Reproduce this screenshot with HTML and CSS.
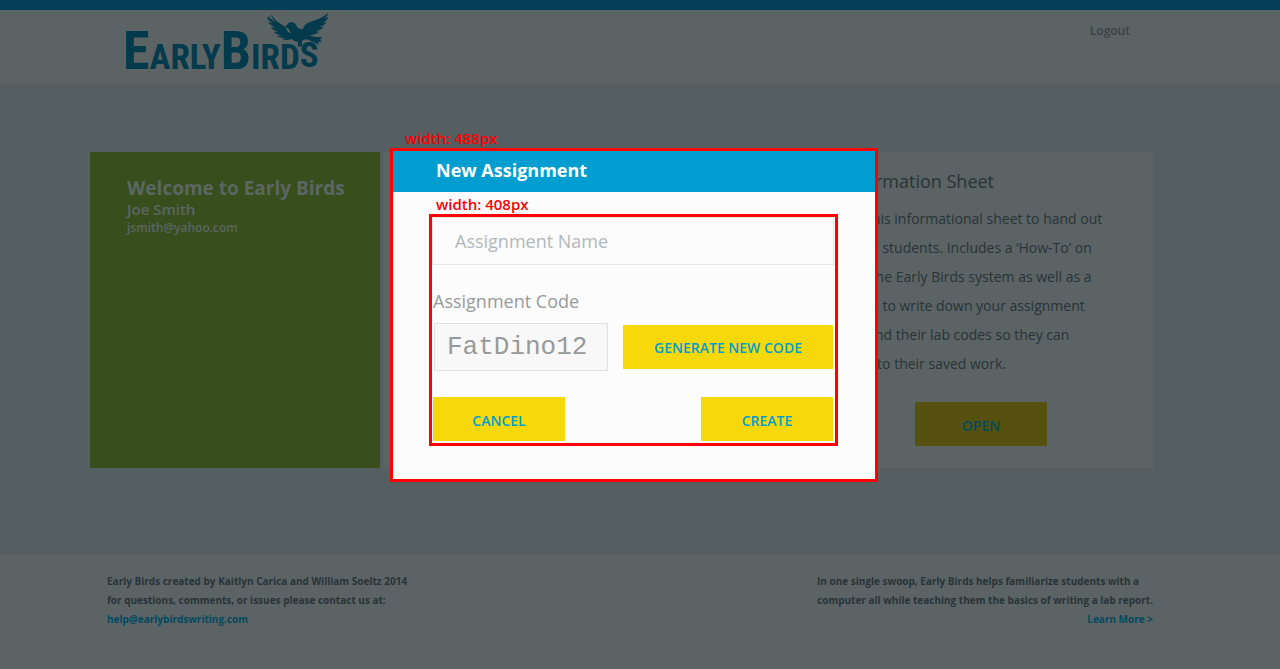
FILE: index.html
```html
<!DOCTYPE html>
<html lang="en">
<head>
<meta charset="utf-8">
<meta name="viewport" content="width=device-width, initial-scale=1">
<title>Early Birds</title>
<link rel="stylesheet" href="styles.css">
</head>
<body>
<header class="header">
  <div class="logo">
    <span class="logo-text"><span class="cap">E</span>ARLY<span class="cap">B</span>IRD<span class="tail">S</span></span>
    <svg class="bird" viewBox="0 0 64 36" aria-hidden="true">
      <path d="M2 2 Q5 7 10 9 Q5 5 5 1 Q9 8 15 11 Q20 14 22 19 L25 20 Q23 17 22 15 L18 14 L21 12 Q22 9 26 9 Q30 10 31 14 Q34 17 37 16 Q38 11 44 9 Q55 6 62 0 Q62 3 58 6 Q62 3 62 5 Q60 9 56 10 L61 9 Q58 13 53 14 L58 14 Q55 17 50 18 L53 19 Q49 22 43 22 L49 24 L56 24 L54 27 L56 29 L52 29 L53 32 L43 27 Q38 25 36 28 L36 33 L32 34 L32 29 Q27 28 26 26 Q20 28 16 26 L20 25 Q14 25 11 23 L16 22 Q10 22 8 19 L12 19 Q6 17 5 14 L10 15 Q4 12 2 9 L7 10 Q1 7 1 4 L4 6 Q2 4 2 2Z"/>
    </svg>
  </div>
  <a class="logout" href="#">Logout</a>
</header>

<main class="main">
  <section class="card welcome">
    <h1>Welcome to Early Birds</h1>
    <p class="name">Joe Smith</p>
    <p class="email">jsmith@yahoo.com</p>
  </section>
  <section class="card"></section>
  <section class="card info">
    <h2>Information Sheet</h2>
    <p>Print this informational sheet to hand out<br>to your students. Includes a ‘How-To’ on<br>using the Early Birds system as well as a<br>section to write down your assignment<br>code and their lab codes so they can<br>return to their saved work.</p>
    <button class="button dim" type="button">OPEN</button>
  </section>
</main>

<footer class="footer">
  <p>Early Birds created by Kaitlyn Carica and William Soeltz 2014<br>for questions, comments, or issues please contact us at:<br><a href="#">help@earlybirdswriting.com</a></p>
  <div>
    <p>In one single swoop, Early Birds helps familiarize students with a<br>computer all while teaching them the basics of writing a lab report.</p>
    <a class="more" href="#">Learn More &gt;</a>
  </div>
</footer>

<div class="overlay">
  <div class="modal" role="dialog" aria-labelledby="modal-title">
    <span class="measure outer">width: 488px</span>
    <h2 class="modal-title" id="modal-title">New Assignment</h2>
    <div class="modal-body">
      <span class="measure inner">width: 408px</span>
      <form class="form">
        <input class="field" type="text" placeholder="Assignment Name" aria-label="Assignment Name">
        <label class="label" for="code">Assignment Code</label>
        <div class="row">
          <input class="code" id="code" type="text" value="FatDino12">
          <button class="button wide" type="button">GENERATE NEW CODE</button>
        </div>
        <div class="row actions">
          <button class="button" type="button">CANCEL</button>
          <button class="button" type="button">CREATE</button>
        </div>
      </form>
    </div>
  </div>
</div>
</body>
</html>
```
FILE: styles.css
```css
* { box-sizing: border-box; }

body {
  position: relative;
  display: flex;
  flex-direction: column;
  min-height: 100vh;
  margin: 0;
  background: #5b6364;
  color: #283438;
  font-family: "Open Sans", "Noto Sans", sans-serif;
}

h1, h2, p { margin: 0; }
a { color: #034a60; text-decoration: none; }

.header {
  display: flex;
  justify-content: space-between;
  height: 83px;
  padding: 0 150px 0 123px;
  border-top: 10px solid #034058;
}

.logo { position: relative; color: #043b4c; }
.logo-text {
  display: block;
  padding-top: 21px;
  font: bold 35px/40px "Roboto Condensed", "Liberation Sans Narrow", Roboto, sans-serif;
}
.cap { font-size: 54px; }
.tail { vertical-align: 2px; }
.bird {
  position: absolute;
  top: 3px;
  left: 143px;
  width: 64px;
  height: 36px;
  fill: #043b4c;
}
.logout { margin-top: 12px; color: #394447; font-size: 12px; line-height: 18px; font-weight: 600; }

.main {
  display: grid;
  grid-template-columns: 290px 1fr 346px;
  gap: 3px;
  padding: 69px 126px 87px 90px;
  background: #555e60;
}
.card { min-height: 316px; background: #5b6364; }

.welcome { padding: 24px 37px; background: #384f1d; color: #5b6663; }
.welcome h1 { font-size: 19px; line-height: 24px; white-space: nowrap; }
.name { font-size: 15px; line-height: 18px; font-weight: 600; }
.email { font-size: 12px; line-height: 20px; font-weight: 600; }

.info { padding: 16px 24px 20px; }
.info h2 { padding-left: 10px; font-size: 18px; line-height: 26px; font-weight: 400; }
.info p { margin-top: 10px; font-size: 14px; line-height: 29px; white-space: nowrap; }
.info .button { display: block; margin: 24px auto 0; }

.button {
  width: 132px;
  height: 44px;
  padding: 3px 0 0;
  border: 0;
  background: #f7d80a;
  color: #009ed0;
  font: 600 14px/20px "Open Sans", "Noto Sans", sans-serif;
}
.wide { width: 210px; padding-top: 2px; }
.dim { background: #57510f; color: #034a60; }

.footer {
  flex: 1;
  display: flex;
  justify-content: space-between;
  padding: 17px 127px 32px 107px;
  font-size: 10px;
  line-height: 19px;
  font-weight: 700;
}
.more { display: block; text-align: right; }

.overlay {
  position: absolute;
  inset: 0;
  display: flex;
  justify-content: center;
  align-items: flex-start;
  padding: 148px 12px 0 0;
}
.modal {
  position: relative;
  width: 488px;
  border: 3px solid #fe0000;
  background: #fcfcfc;
}
.modal-title {
  padding: 0 43px 2px;
  background: #009ed0;
  color: #fff;
  font-size: 18px;
  line-height: 39px;
}
.modal-body { position: relative; padding: 22px 37px 33px 36px; }

.measure {
  position: absolute;
  color: #fe0000;
  font-size: 15px;
  line-height: 20px;
  font-weight: 600;
}
.outer { top: -23px; left: 12px; }
.inner { top: 2px; left: 43px; }

.form { padding-bottom: 2px; border: 3px solid #fe0000; }
.field {
  display: block;
  width: calc(100% - 1px);
  height: 48px;
  padding: 0 22px;
  border: 1px solid #e4e6e7;
  background: #fcfcfc;
  color: #969a9b;
  font: 18px "Open Sans", "Noto Sans", sans-serif;
}
.field::placeholder { color: #b1b8ba; opacity: 1; }
.label {
  display: block;
  margin-top: 24px;
  padding-left: 1px;
  color: #969a9b;
  font-size: 18px;
  line-height: 24px;
}
.row {
  display: flex;
  justify-content: space-between;
  align-items: center;
  margin-top: 10px;
  padding: 0 2px;
}
.actions { margin-top: 26px; padding-left: 1px; }
.code {
  width: 174px;
  height: 48px;
  padding: 0 12px;
  border: 1px solid #e0e1e1;
  background: #f8f8f8;
  color: #969a9b;
  font: 26px "Liberation Mono", monospace;
}
```
